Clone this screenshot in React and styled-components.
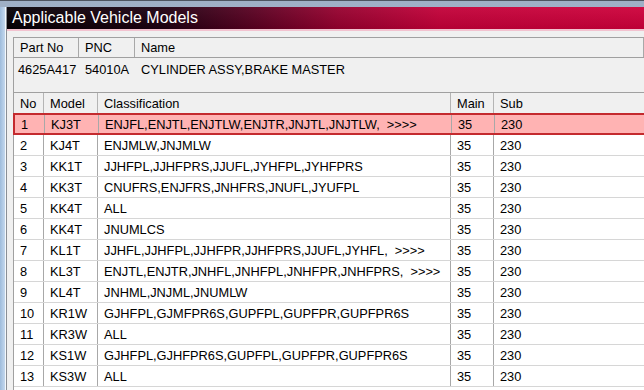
import styled, { createGlobalStyle } from 'styled-components';

const rows = [
  ['1', 'KJ3T', 'ENJFL,ENJTL,ENJTLW,ENJTR,JNJTL,JNJTLW,  >>>>', '35', '230'],
  ['2', 'KJ4T', 'ENJMLW,JNJMLW', '35', '230'],
  ['3', 'KK1T', 'JJHFPL,JJHFPRS,JJUFL,JYHFPL,JYHFPRS', '35', '230'],
  ['4', 'KK3T', 'CNUFRS,ENJFRS,JNHFRS,JNUFL,JYUFPL', '35', '230'],
  ['5', 'KK4T', 'ALL', '35', '230'],
  ['6', 'KK4T', 'JNUMLCS', '35', '230'],
  ['7', 'KL1T', 'JJHFL,JJHFPL,JJHFPR,JJHFPRS,JJUFL,JYHFL,  >>>>', '35', '230'],
  ['8', 'KL3T', 'ENJTL,ENJTR,JNHFL,JNHFPL,JNHFPR,JNHFPRS,  >>>>', '35', '230'],
  ['9', 'KL4T', 'JNHML,JNJML,JNUMLW', '35', '230'],
  ['10', 'KR1W', 'GJHFPL,GJMFPR6S,GUPFPL,GUPFPR,GUPFPR6S', '35', '230'],
  ['11', 'KR3W', 'ALL', '35', '230'],
  ['12', 'KS1W', 'GJHFPL,GJHFPR6S,GUPFPL,GUPFPR,GUPFPR6S', '35', '230'],
  ['13', 'KS3W', 'ALL', '35', '230'],
];

const Global = createGlobalStyle`
  html, body { margin: 0; padding: 0; }
  body {
    width: 644px;
    height: 390px;
    overflow: hidden;
    font-family: "Liberation Sans", Arial, sans-serif;
    background: #a8b7cb;
  }
`;

const Screen = styled.div`
  width: 644px;
  height: 390px;
  border-top: 1px solid #4e5560;
  box-sizing: border-box;
  padding: 6px 0 0 0;
  background: linear-gradient(180deg, #9fb0c6, #b2c0d2);
  display: flex;
  overflow: hidden;
`;

const Frame = styled.div`
  width: 5px;
  flex: none;
  background: linear-gradient(90deg, #9ebcdc, #c4d8ee);
  border-right: 1px solid #f4f8fc;
`;

const Window = styled.div`
  flex: 1;
  min-width: 0;
  background: #f0f0f0;
  border-left: 1px solid #8a8f96;
  display: flex;
  flex-direction: column;
`;

const TitleBar = styled.div`
  height: 22px;
  flex: none;
  display: flex;
  align-items: center;
  padding-left: 5px;
  color: #ffffff;
  font-size: 16px;
  background:
    linear-gradient(180deg, rgba(255,255,255,0.06), rgba(0,0,0,0.08)),
    linear-gradient(90deg, #050004 0%, #1c0010 24%, #560020 38%, #96002e 52%, #c20038 68%, #cd003a 100%);
  border-bottom: 2px solid #f2c2cf;
`;

const Body = styled.div`
  flex: 1;
  padding: 6px 0 0 6px;
  display: flex;
  flex-direction: column;
`;

const PartBox = styled.div`
  border: 1px solid #a0a0a0;
  border-right: none;
  border-bottom: none;
  height: 54px;
  font-size: 12.8px;
  color: #000;
`;

const PartRow = styled.div`
  display: grid;
  grid-template-columns: 65px 56px 1fr;
  height: ${p => p.$h}px;
  border-bottom: ${p => (p.$head ? '1px solid #a0a0a0' : 'none')};
`;

const PartCell = styled.div`
  display: flex;
  align-items: center;
  padding-left: ${p => p.$pad || 6}px;
  border-right: ${p => (p.$head ? '1px solid #a8a8a8' : 'none')};
  white-space: nowrap;
`;

const Grid = styled.div`
  border-top: 1px solid #a0a0a0;
  border-left: 1px solid #a0a0a0;
  background: #ffffff;
  font-size: 12.8px;
  color: #000;
  flex: 1;
`;

const Row = styled.div`
  display: grid;
  grid-template-columns: 30px 54px 353px 43px 1fr;
  height: 21px;
  box-sizing: border-box;
  background: ${p => (p.$head ? '#f0f0f0' : p.$sel ? '#ffb3b3' : '#ffffff')};
  border-bottom: 1px solid ${p => (p.$head ? '#a0a0a0' : '#d6d6d6')};
  ${p => p.$sel && `
    border-top: 2px solid #c42a2e;
    border-bottom: 2px solid #c42a2e;
    border-left: 2px solid #c42a2e;
    margin-left: -1px;
    height: 22px;
    margin-top: -1px;
  `}
`;

const Cell = styled.div`
  display: flex;
  align-items: center;
  padding-left: 6px;
  border-right: 1px solid ${p => (p.$head ? '#b4b4b4' : '#a8a8a8')};
  white-space: pre;
  overflow: hidden;
  &:last-child { border-right: none; }
`;

const App = () => (
  <>
    <Global />
    <Screen>
      <Frame />
      <Window>
        <TitleBar>Applicable Vehicle Models</TitleBar>
        <Body>
          <PartBox>
            <PartRow $head $h={19}>
              <PartCell $head>Part No</PartCell>
              <PartCell $head>PNC</PartCell>
              <PartCell $head>Name</PartCell>
            </PartRow>
            <PartRow $h={23}>
              <PartCell $pad={4}>4625A417</PartCell>
              <PartCell>54010A</PartCell>
              <PartCell>CYLINDER ASSY,BRAKE MASTER</PartCell>
            </PartRow>
          </PartBox>
          <Grid>
            <Row $head>
              <Cell $head>No</Cell>
              <Cell $head>Model</Cell>
              <Cell $head>Classification</Cell>
              <Cell $head>Main</Cell>
              <Cell $head>Sub</Cell>
            </Row>
            {rows.map((r, i) => (
              <Row key={r[0]} $sel={i === 0}>
                {r.map((c, j) => (
                  <Cell key={j}>{c}</Cell>
                ))}
              </Row>
            ))}
          </Grid>
        </Body>
      </Window>
    </Screen>
  </>
);

export default App;
